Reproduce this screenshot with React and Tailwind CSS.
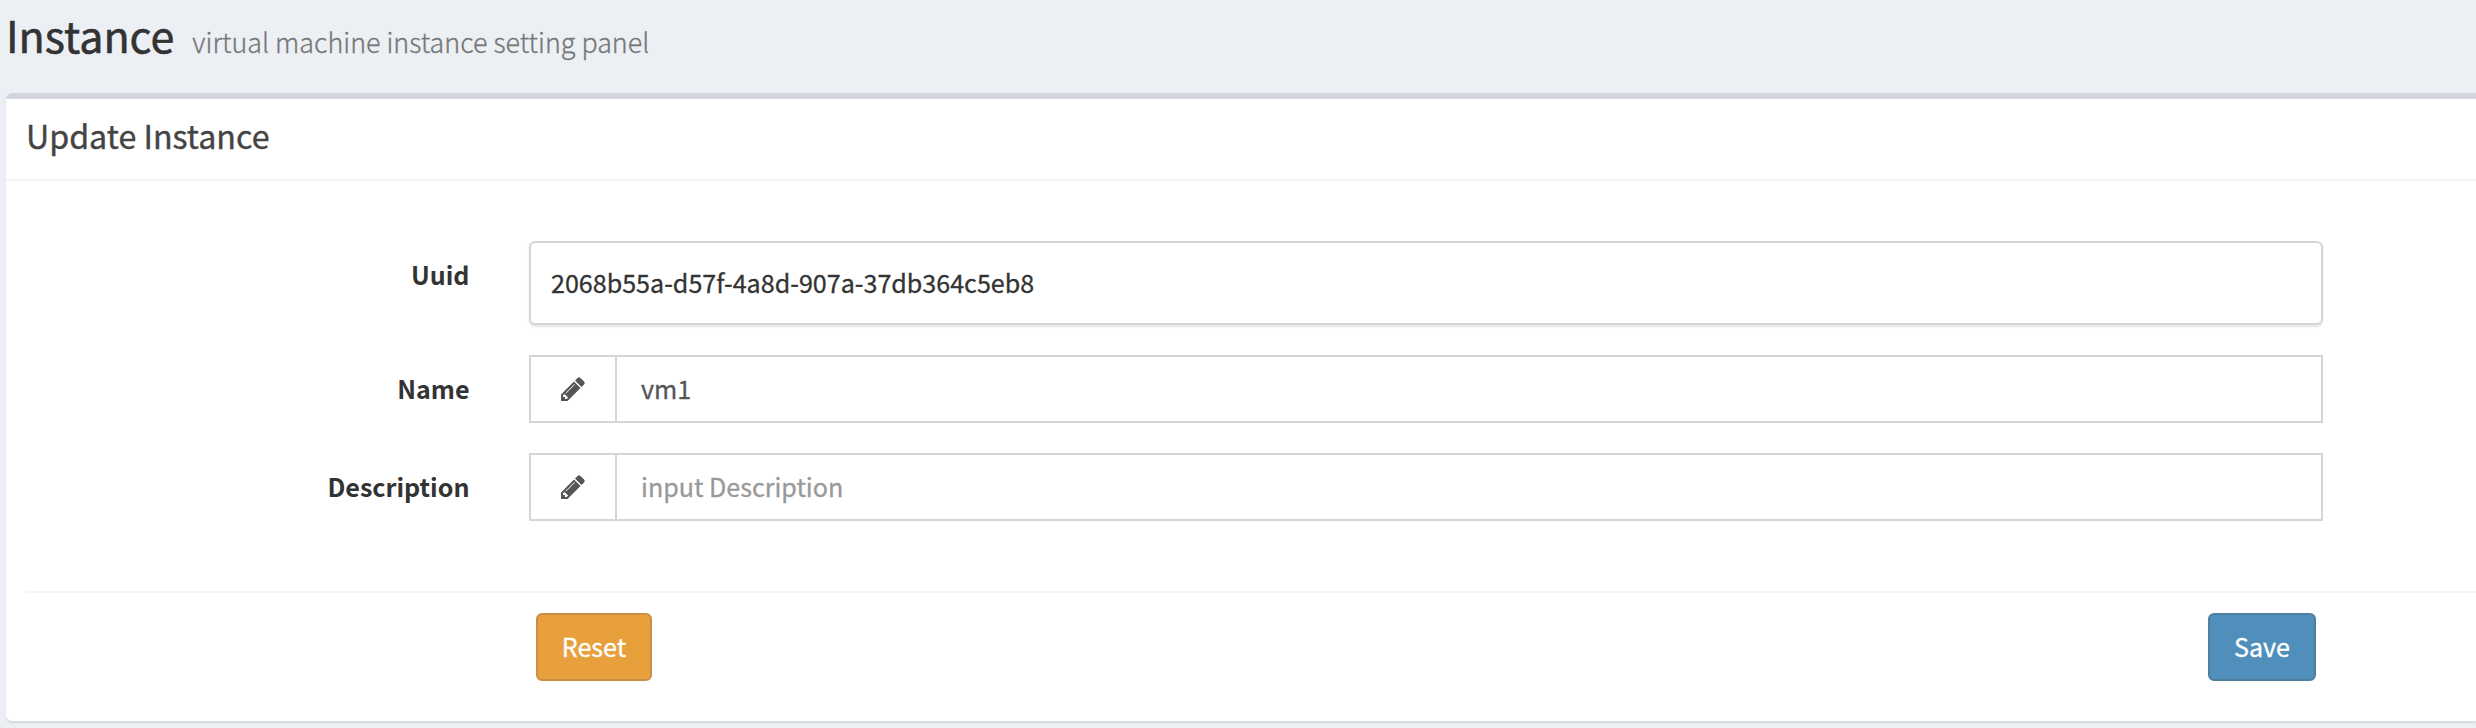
function PencilIcon() {
  return (
    <svg viewBox="0 0 1792 1792" className="size-7" fill="currentColor" aria-hidden="true">
      <path d="M491 1536l91-91-235-235-91 91v107h128v128h107zM1014 608q0-22-22-22-10 0-17 7l-542 542q-7 7-7 17 0 22 22 22 10 0 17-7l542-542q7-7 7-17zM960 416l416 416-832 832h-416v-416zM1643 512q0 53-37 90l-166 166-416-416 166-165q36-38 90-38 53 0 91 38l235 234q37 39 37 91z" />
    </svg>
  );
}

function Field({ label, children }) {
  return (
    <div className="flex">
      <label className="w-[463.5px] shrink-0 pt-[13px] text-right font-bold leading-10 [-webkit-text-stroke:0]">
        {label}
      </label>
      <div className="ml-[59.5px] w-[1794px] shrink-0">{children}</div>
    </div>
  );
}

function IconInput({ value, placeholder }) {
  return (
    <div className="flex h-[68px] border-2 border-[#d3d5da]">
      <div className="flex w-[86px] shrink-0 items-center justify-center border-r-2 border-[#d3d5da] text-[#555]">
        <PencilIcon />
      </div>
      <input
        className="min-w-0 flex-1 bg-transparent pl-6 text-[#555] outline-none placeholder:text-[#999]"
        defaultValue={value}
        placeholder={placeholder}
      />
    </div>
  );
}

export default function App() {
  return (
    <div className="h-[728px] w-[2476px] overflow-hidden bg-[#ecf0f5] font-['Noto_Sans_CJK_SC','Source_Sans_Pro',sans-serif] text-[25.09px] text-[#333] [-webkit-text-stroke:0.3px]">
      <header className="flex h-[93px] items-baseline pl-[6px] pt-[10px]">
        <h1 className="text-[43px] leading-[48px] [-webkit-text-stroke:0.6px]">Instance</h1>
        <small className="ml-[18px] text-[26.86px] font-light leading-[48px] text-[#777]">
          virtual machine instance setting panel
        </small>
      </header>
      <section className="ml-[6px] flex h-[628px] flex-col rounded-l-[6px] border-t-[6px] border-[#d2d5dd] bg-white shadow-[0_2px_2px_rgba(0,0,0,0.1)]">
        <div className="h-[82px] shrink-0 border-b-2 border-[#f4f4f4] pl-5 pt-4">
          <h3 className="text-[32.2px] leading-10 text-[#444] [-webkit-text-stroke:0.4px]">Update Instance</h3>
        </div>
        <form className="flex flex-col gap-[30px] pt-[60px]">
          <Field label="Uuid">
            <div className="flex h-[84px] items-center rounded-[6px] border-2 border-[#d3d5da] pl-5 shadow-[0_2px_2px_rgba(0,0,0,0.1)]">
              2068b55a-d57f-4a8d-907a-37db364c5eb8
            </div>
          </Field>
          <Field label="Name">
            <IconInput value="vm1" />
          </Field>
          <Field label="Description">
            <IconInput placeholder="input Description" />
          </Field>
        </form>
        <footer className="ml-5 mt-[70px] flex justify-between border-t-2 border-[#f4f4f4] pl-[510px] pr-[160px] pt-5 text-white">
          <button className="h-[68px] w-[116px] rounded-[6px] border-2 border-[#c98f44] bg-[#e8a03d]">
            Reset
          </button>
          <button className="h-[68px] w-[108px] rounded-[6px] border-2 border-[#4f7f9f] bg-[#508fbc]">
            Save
          </button>
        </footer>
      </section>
    </div>
  );
}
